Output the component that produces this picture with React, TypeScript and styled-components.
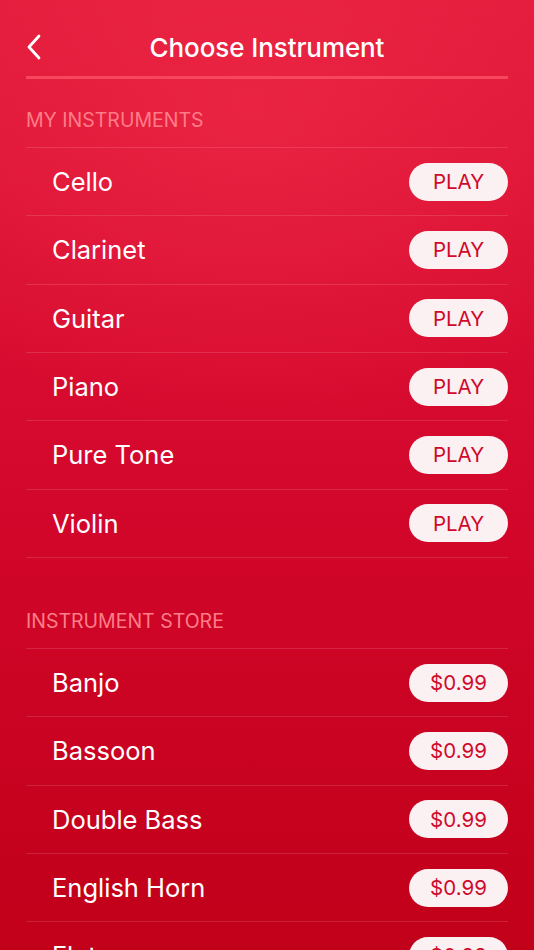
import styled, { createGlobalStyle } from "styled-components";

const GlobalStyle = createGlobalStyle`
  html, body {
    margin: 0;
    padding: 0;
    overflow: hidden;
  }
  body {
    font-family: Inter, "Noto Sans", sans-serif;
    -webkit-font-smoothing: antialiased;
  }
`;

type Section = {
  title: string;
  action: string;
  items: string[];
};

const sections: Section[] = [
  {
    title: "MY INSTRUMENTS",
    action: "PLAY",
    items: ["Cello", "Clarinet", "Guitar", "Piano", "Pure Tone", "Violin"],
  },
  {
    title: "INSTRUMENT STORE",
    action: "$0.99",
    items: ["Banjo", "Bassoon", "Double Bass", "English Horn", "Flute", "French Horn"],
  },
];

const BackIcon = () => (
  <svg width="16" height="26" viewBox="0 0 16 26" fill="none">
    <path
      d="M13 2 L3 13 L13 24"
      stroke="#fff"
      strokeWidth="2.8"
      strokeLinecap="round"
      strokeLinejoin="round"
    />
  </svg>
);

export default function App() {
  return (
    <>
      <GlobalStyle />
      <Screen>
        <Header>
          <BackButton aria-label="Back">
            <BackIcon />
          </BackButton>
          <Title>Choose Instrument</Title>
          <span />
        </Header>

        {sections.map((section) => (
          <Group key={section.title}>
            <GroupLabel>{section.title}</GroupLabel>
            <List>
              {section.items.map((name) => (
                <Row key={name}>
                  <Name>{name}</Name>
                  <Pill>{section.action}</Pill>
                </Row>
              ))}
            </List>
          </Group>
        ))}
      </Screen>
    </>
  );
}

const Screen = styled.div`
  height: 950px;
  overflow: hidden;
  padding: 0 26px;
  box-sizing: border-box;
  background: radial-gradient(
      ellipse 420px 320px at 250px 110px,
      rgba(242, 46, 74, 0.55),
      rgba(242, 46, 74, 0) 100%
    ),
    linear-gradient(180deg, #e31b3c 0%, #d4072c 50%, #c10019 100%);
`;

const Header = styled.header`
  height: 79px;
  display: grid;
  grid-template-columns: 1fr auto 1fr;
  align-items: center;
  border-bottom: 3px solid #f7475c;
  padding-top: 18px;
  box-sizing: border-box;
`;

const BackButton = styled.button`
  justify-self: start;
  display: flex;
  align-items: center;
  background: none;
  border: none;
  padding: 0;
  cursor: pointer;
`;

const Title = styled.h1`
  margin: 0;
  color: #fff;
  font-size: 26px;
  font-weight: 500;
  letter-spacing: -0.1px;
`;

const Group = styled.section`
  & + & {
    margin-top: 22px;
  }
`;

const GroupLabel = styled.h2`
  margin: 0;
  padding: 30px 0 16px;
  font-size: 19.5px;
  line-height: 22px;
  font-weight: 400;
  color: #ff7d88;
`;

const List = styled.div`
  border-bottom: 1px solid rgba(255, 255, 255, 0.13);
`;

const Row = styled.div`
  height: 68.33px;
  box-sizing: border-box;
  border-top: 1px solid rgba(255, 255, 255, 0.13);
  display: flex;
  align-items: center;
  justify-content: space-between;
  padding-left: 26px;
`;

const Name = styled.span`
  color: #fff;
  font-size: 25.5px;
  font-weight: 400;
`;

const Pill = styled.button`
  width: 99px;
  height: 38px;
  border: none;
  border-radius: 19px;
  background: #fbf0f2;
  color: #cf0a2b;
  font-family: inherit;
  font-size: 20.5px;
  font-weight: 400;
  display: flex;
  align-items: center;
  justify-content: center;
  padding: 0;
  cursor: pointer;
`;
